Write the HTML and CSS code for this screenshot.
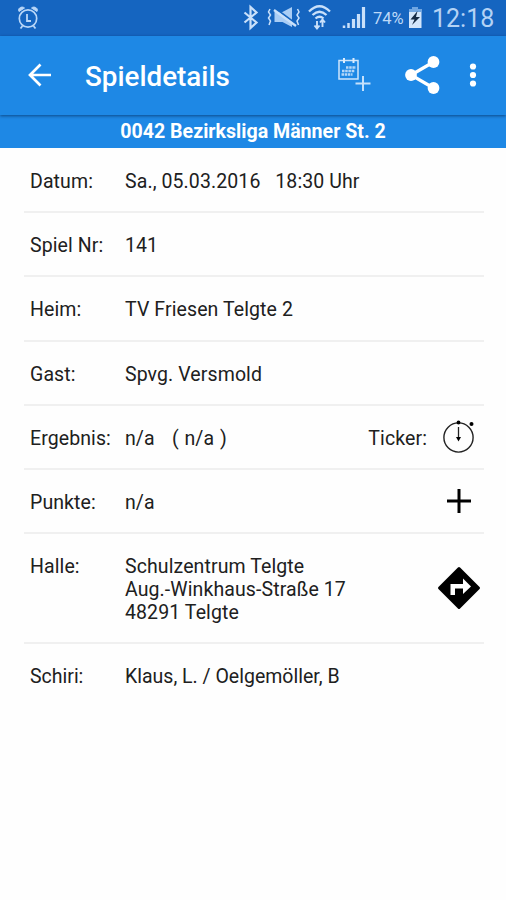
FILE: index.html
```html
<!DOCTYPE html>
<html lang="de">
<head>
<meta charset="utf-8">
<title>Spieldetails</title>
<link rel="stylesheet" href="styles.css">
</head>
<body>
<header class="status">
  <svg class="alarm" width="24" height="26" viewBox="16 5 24 26" fill="none" stroke="#b9d7f8">
    <circle cx="28" cy="18.500" r="8.700" stroke-width="1.700"/>
    <path d="M19 11.500c-2-3 3-6 5.500-3.500zM37 11.500c2-3-3-6-5.500-3.500z" fill="#b9d7f8" stroke-width="1"/>
    <path d="M22.500 26l-2 2.500M33.500 26l2 2.500M27 14v7h4" stroke-width="1.800"/>
  </svg>
  <svg class="signals" width="126" height="28" viewBox="242 4 126 28" fill="none" stroke="#c9e0fa">
    <path d="M244.500 12.500l12 10-6 5.500V7l6 5.500-12 10" stroke-width="2.200"/>
    <path d="M270 9l-1.500 3 2 3-2 3 2 3-1.500 4M297.500 9l1.500 3-2 3 2 3-2 3 1.500 4" stroke-width="1.500"/>
    <path d="M274.500 12h8l9.500-5v20l-9.500-5h-8z" fill="#a9cdf5" stroke="none"/>
    <path d="M275.500 8.500l20 15" stroke="#1565c0" stroke-width="2"/>
    <path d="M274 10l22 16" stroke-width="2.400"/>
    <path d="M309 11.500q10.500-10.500 21 0M312.500 15q7-6.500 14 0M315.500 18.500q4-3.500 8 0" stroke-width="2.300"/>
    <path d="M317 28v-7M322.500 20v7M314.500 25.500l2.500 3 2.500-3M320 22.500l2.500-3 2.500 3" stroke-width="1.900"/>
    <path d="M344 28v-2.500M348.500 28v-5" stroke-width="2.500"/>
    <path d="M353.500 28v-9M358.500 28V14M363.500 28V7" stroke-width="3.200"/>
  </svg>
  <span class="percent">74%</span>
  <svg class="battery" width="16" height="24" viewBox="407 6 16 24">
    <path d="M409 9h3V7h6v2h3.500v19H409z" fill="#d3e6fb"/>
    <path d="M409 9h3V7h6v2h3.500v3H409z" fill="#6fa6e2"/>
    <path d="M417.500 11l-7 8.500h4L412 25l8-8h-4z" fill="#152b45"/>
  </svg>
  <span class="clock">12:18</span>
</header>
<nav class="appbar">
  <svg class="back" width="24" height="24" viewBox="28 63 24 24" fill="none" stroke="#fff" stroke-width="2.700"><path d="M51 75H31M40.500 64.500L30 75l10.500 10.500"/></svg>
  <h1 class="title">Spieldetails</h1>
  <svg class="actions" width="150" height="44" viewBox="335 53 150 44" fill="none" stroke="#fff">
    <path d="M339 60.500h19v18.500h-19z" stroke="#cfe5fb" stroke-width="1.500"/>
    <path d="M344 58v5M353.500 58v5" stroke="#dcecfd" stroke-width="2"/>
    <path d="M346 67.500h10M342 71h13M341.500 74.500h11" stroke="#b5d7f8" stroke-width="2.400" stroke-dasharray="2.500 .700"/>
    <path d="M355.500 83.500h15M363 76v15" stroke="#c4e0fb" stroke-width="2"/>
    <path d="M433.500 62L411 75l22.500 13" stroke-width="3.200"/>
    <g fill="#fff" stroke="none">
      <circle cx="411" cy="75" r="5.900"/><circle cx="433.500" cy="62" r="5.900"/><circle cx="433.500" cy="88" r="5.900"/>
      <circle cx="473" cy="66.500" r="3.100"/><circle cx="473" cy="75" r="3.100"/><circle cx="473" cy="83.500" r="3.100"/>
    </g>
  </svg>
</nav>
<h2 class="league">0042 Bezirksliga Männer St. 2</h2>
<main class="details">
  <div class="row"><span class="label">Datum:</span><span class="value">Sa., 05.03.2016 &nbsp; 18:30 Uhr</span></div>
  <div class="row"><span class="label">Spiel Nr:</span><span class="value">141</span></div>
  <div class="row"><span class="label">Heim:</span><span class="value">TV Friesen Telgte 2</span></div>
  <div class="row"><span class="label">Gast:</span><span class="value">Spvg. Versmold</span></div>
  <div class="row"><span class="label">Ergebnis:</span><span class="value result">n/a &nbsp; ( n/a )</span><span class="ticker">Ticker:</span>
    <svg class="icon" width="44" height="44" viewBox="437 415 44 44"><circle cx="458.500" cy="437.500" r="14.600" fill="none" stroke="#222" stroke-width="1.400"/><path d="M458.500 427v12" stroke="#222" stroke-width="1.300"/><circle cx="458.500" cy="422.500" r="1.900"/><circle cx="471.500" cy="424" r="2"/><path d="M456 437h5l-2.500 4.500z"/></svg>
  </div>
  <div class="row"><span class="label">Punkte:</span><span class="value">n/a</span>
    <svg class="icon" width="44" height="44" viewBox="437 479 44 44"><path d="M447 501h24M459 489v24" stroke="#000" stroke-width="3"/></svg>
  </div>
  <div class="row hall"><span class="label">Halle:</span><span class="value">Schulzentrum Telgte<br>Aug.-Winkhaus-Straße 17<br>48291 Telgte</span>
    <svg class="icon" width="44" height="44" viewBox="437 566 44 44"><path d="M459 568.500L478.500 588 459 607.500 439.500 588z" stroke="#000" stroke-width="3" stroke-linejoin="round"/><path d="M450.500 595v-11h12.500v-5.500l8 8-8 7.500v-5.500h-8v6.500z" fill="#fff"/></svg>
  </div>
  <div class="row last"><span class="label">Schiri:</span><span class="value">Klaus, L. / Oelgemöller, B</span></div>
</main>
</body>
</html>
```
FILE: styles.css
```css
* { box-sizing: border-box; }
body { margin: 0; height: 900px; background: #fefefe; color: #202020; font-family: Roboto, sans-serif; overflow: hidden; }
svg { display: block; flex: none; }
.status { display: flex; height: 35.5px; background: #1565c0; padding-left: 16px; color: #bcd9f8; }
.alarm { margin-top: 5px; }
.signals { margin: 4px 0 0 202px; }
.percent { width: 34px; margin-left: 5px; font-size: 16.5px; line-height: 37px; }
.battery { margin-top: 6px; }
.clock { margin-left: 9px; font-size: 25px; line-height: 38px; white-space: nowrap; color: #b3d2f5; }
.appbar { display: flex; height: 79.5px; background: #1e88e5; padding-left: 28px; position: relative; box-shadow: 0 1px 3px rgba(0, 30, 70, .6); }
.back { margin-top: 27.5px; }
.title { width: 250px; margin: 0 0 0 33px; font-size: 27.8px; font-weight: 500; line-height: 82px; color: #fff; }
.actions { margin-top: 17.5px; }
.league { height: 33px; margin: 0; background: #1e88e5; color: #fff; font-size: 19.6px; font-weight: 700; line-height: 34px; text-align: center; }
.details { padding: 1px 22px 0 24px; }
.row { display: flex; height: 64.2px; padding: 21px 0 0 6px; border-bottom: 2px solid #f0f0f0; font-size: 19.5px; line-height: 23px; letter-spacing: .1px; white-space: nowrap; }
.label { width: 95px; flex: none; }
.value { flex: 1; }
.result { word-spacing: .8px; }
.ticker { margin-right: 10px; }
.icon { margin: -12px 3px 0 0; }
.hall { height: 110px; }
.hall .icon { margin-top: 11px; }
.last { border-bottom: 0; letter-spacing: 0; }
```
